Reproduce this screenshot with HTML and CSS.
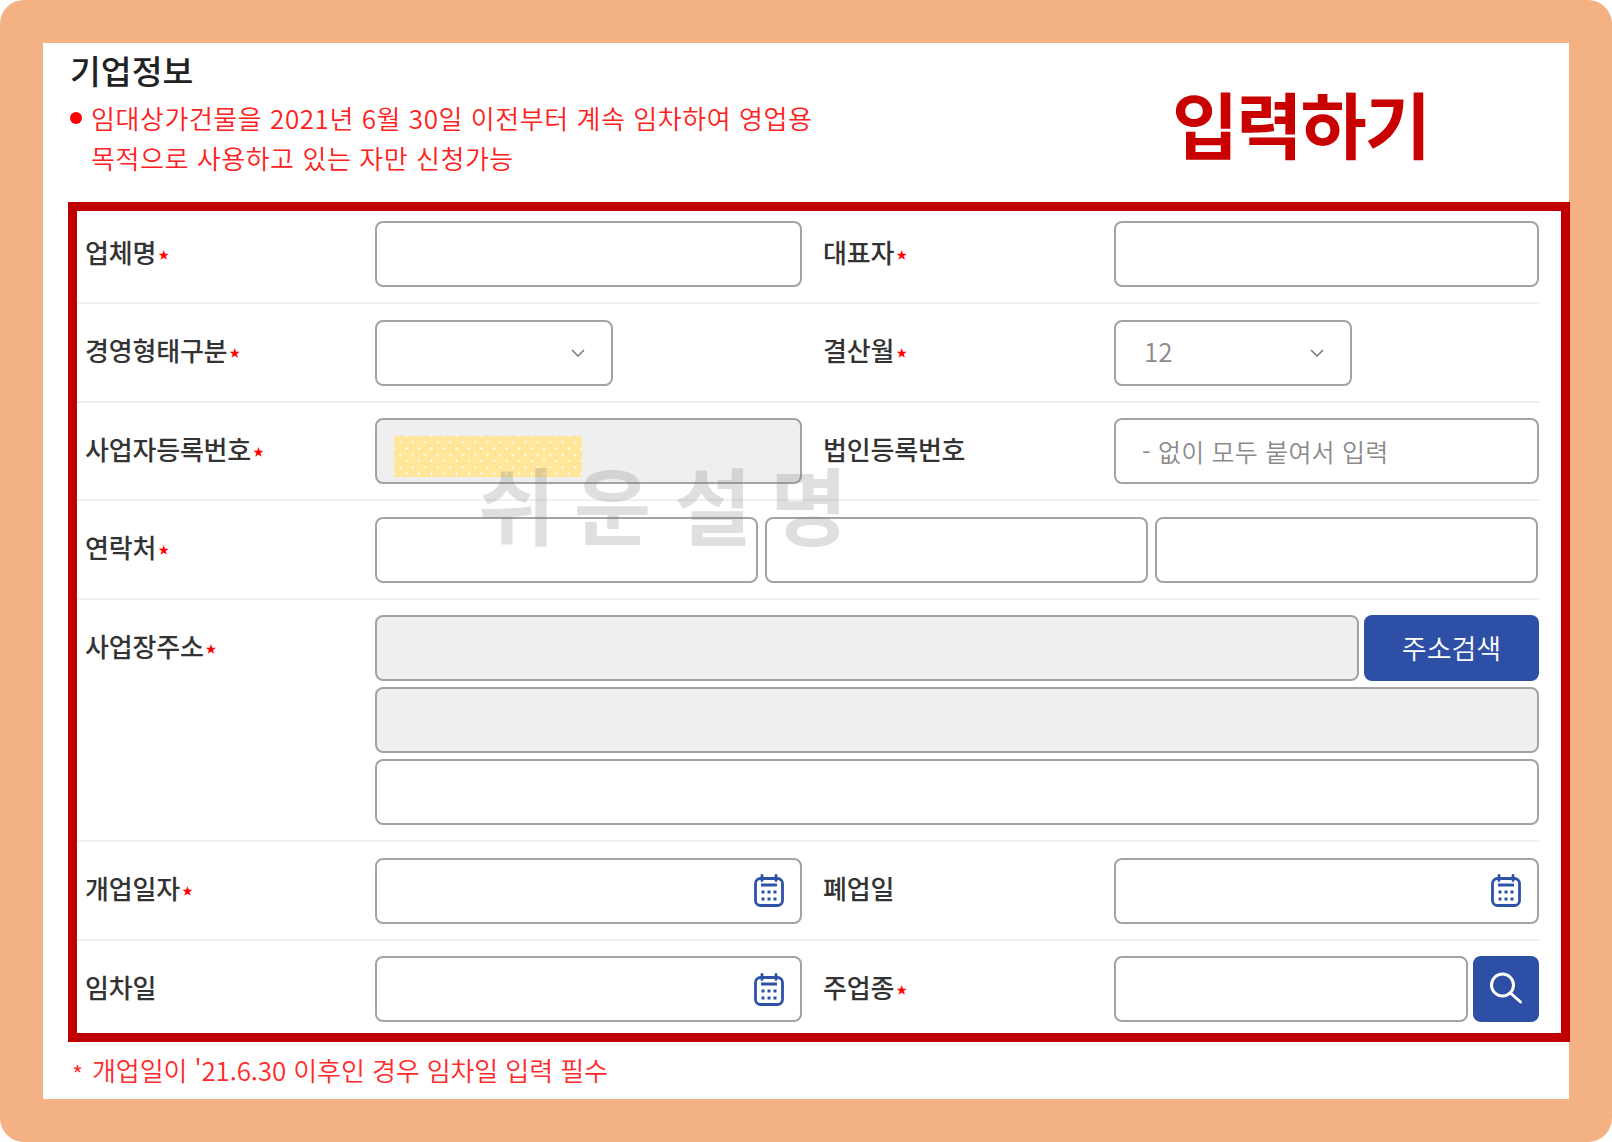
FILE: index.html
```html
<!DOCTYPE html>
<html lang="ko">
<head>
    <meta charset="UTF-8">
    <meta name="viewport" content="width=device-width, initial-scale=1.0">
    <title>기업정보 입력하기</title>
    <link rel="stylesheet" href="styles.css">
</head>
<body>
    <svg class="icon-defs" width="0" height="0" aria-hidden="true">
        <symbol id="calendar" viewBox="0 0 30 33">
            <rect x="1.500" y="4.500" width="27" height="27" rx="5" fill="none" stroke="#2d52a6" stroke-width="2.800"/>
            <path d="M8 1.500v5M22 1.500v5" stroke="#2d52a6" stroke-width="2.800" stroke-linecap="round"/>
            <path d="M7 11h16" stroke="#2d52a6" stroke-width="3"/>
            <path d="M7.500 18h3M13.500 18h3M19.500 18h3M7.500 25h3M13.500 25h3M19.500 25h3" stroke="#2d52a6" stroke-width="3"/>
        </symbol>
    </svg>

    <div class="sheet">
        <div class="card">
            <!-- Heading -->
            <div class="head">
                <div class="head-text">
                    <h1 class="title">기업정보</h1>
                    <ul class="notice">
                        <li>임대상가건물을 2021년 6월 30일 이전부터 계속 임차하여 영업용<br>목적으로 사용하고 있는 자만 신청가능</li>
                    </ul>
                </div>
                <div class="stamp">입력하기</div>
            </div>

            <!-- Form -->
            <div class="frame">
                <div class="row">
                    <label class="label">업체명<span class="req">★</span></label>
                    <input class="input" type="text">
                    <label class="label label-2">대표자<span class="req">★</span></label>
                    <input class="input" type="text">
                </div>
                <div class="row">
                    <label class="label">경영형태구분<span class="req">★</span></label>
                    <div class="select"><svg class="chevron" viewBox="0 0 14 8"><path d="M1 1l6 6 6-6"/></svg></div>
                    <label class="label label-2">결산월<span class="req">★</span></label>
                    <div class="select"><span class="select-value">12</span><svg class="chevron" viewBox="0 0 14 8"><path d="M1 1l6 6 6-6"/></svg></div>
                </div>
                <div class="row">
                    <label class="label">사업자등록번호<span class="req">★</span></label>
                    <div class="input input-off masked"><span class="mask"></span></div>
                    <label class="label label-2">법인등록번호</label>
                    <input class="input" type="text" placeholder="- 없이 모두 붙여서 입력">
                </div>
                <div class="row">
                    <label class="label">연락처<span class="req">★</span></label>
                    <div class="wide phone">
                        <input class="input" type="text">
                        <input class="input" type="text">
                        <input class="input" type="text">
                    </div>
                </div>
                <div class="row row-top">
                    <label class="label label-top">사업장주소<span class="req">★</span></label>
                    <div class="wide address">
                        <div class="address-line">
                            <div class="input input-off"></div>
                            <button class="btn-address" type="button">주소검색</button>
                        </div>
                        <div class="input input-off"></div>
                        <input class="input" type="text">
                    </div>
                </div>
                <div class="row">
                    <label class="label">개업일자<span class="req">★</span></label>
                    <div class="input date"><svg class="cal"><use href="#calendar"/></svg></div>
                    <label class="label label-2">폐업일</label>
                    <div class="input date"><svg class="cal"><use href="#calendar"/></svg></div>
                </div>
                <div class="row row-last">
                    <label class="label">임차일</label>
                    <div class="input date"><svg class="cal"><use href="#calendar"/></svg></div>
                    <label class="label label-2">주업종<span class="req">★</span></label>
                    <div class="search-line">
                        <input class="input" type="text">
                        <button class="btn-search" type="button" aria-label="검색">
                            <svg viewBox="0 0 40 40" width="40" height="40"><circle cx="16.500" cy="16" r="11"/><path d="M25 24.500l9.500 8.500"/></svg>
                        </button>
                    </div>
                </div>
                <div class="watermark">쉬운 설명</div>
            </div>

            <p class="footnote"><span class="foot-star">*</span>개업일이 '21.6.30 이후인 경우 임차일 입력 필수</p>
        </div>
    </div>
</body>
</html>
```

FILE: styles.css
```css
* {
    box-sizing: border-box;
}
body {
    margin: 0;
    background: #fff;
    font-family: "Noto Sans CJK KR", "Noto Sans", sans-serif;
    color: #333;
}
.icon-defs {
    position: absolute;
}
.sheet {
    width: 1612px;
    height: 1142px;
    padding: 43px;
    background: #f4b183;
    border-radius: 24px;
}
.card {
    width: 1526px;
    height: 1056px;
    background: #fff;
    padding-left: 25px;
}

/* heading */
.head {
    display: flex;
    height: 159px;
}
.head-text {
    width: 1080px;
    padding-left: 2px;
}
.title {
    margin: 0;
    padding-top: 5px;
    height: 55px;
    font-size: 33.500px;
    line-height: 44px;
    font-weight: 500;
    color: #222;
}
.notice {
    margin: 0;
    padding: 0 0 0 21px;
    list-style: none;
    position: relative;
    font-size: 26px;
    line-height: 40px;
    font-weight: 350;
    letter-spacing: 0.550px;
    color: #ff2020;
}
.notice::before {
    content: "";
    position: absolute;
    left: 0;
    top: 14px;
    width: 12px;
    height: 12px;
    border-radius: 50%;
    background: #f00;
}
.stamp {
    margin-left: 24px;
    padding-top: 29px;
    font-size: 72px;
    line-height: 100px;
    font-weight: 700;
    color: #c80000;
    letter-spacing: -2px;
    white-space: nowrap;
}

/* form */
.frame {
    position: relative;
    width: 1502px;
    height: 840px;
    border: 9px solid #c00000;
    padding-top: 10px;
}
.row {
    display: grid;
    grid-template-columns: 290px 426.500px 312.500px 425px;
    align-items: center;
    width: 1462px;
    padding: 0 0 15px 8px;
    margin-bottom: 15.500px;
    border-bottom: 2px solid #f0f0f0;
}
.row-top {
    align-items: start;
}
.row-last {
    border-bottom: 0;
    margin-bottom: 0;
    padding-bottom: 0;
}
.label {
    padding-bottom: 5px;
    font-size: 26px;
    line-height: 36px;
    font-weight: 500;
    letter-spacing: -0.200px;
    color: #333;
}
.label-2 {
    padding-left: 21.500px;
}
.label-top {
    padding-top: 13px;
}
.req {
    color: #f00;
    font-size: 11px;
    line-height: 0;
    margin-left: 2px;
    vertical-align: 4px;
}
.input {
    display: block;
    width: 100%;
    height: 66px;
    padding: 0 26px;
    border: 2px solid #a3a3a3;
    border-radius: 8px;
    background: #fff;
    font-family: inherit;
    font-size: 25px;
    color: #333;
}
.input::placeholder {
    color: #8a8a8a;
    font-weight: 350;
    letter-spacing: 0.200px;
}
.input-off {
    background: #efefef;
}
.masked {
    padding: 16px 17px;
}
.mask {
    display: block;
    width: 188px;
    height: 41px;
    background-color: #ffe699;
    background-image: radial-gradient(circle, #fff 0.9px, transparent 1.2px), radial-gradient(circle, #fff 0.9px, transparent 1.2px);
    background-size: 12.500px 12.500px;
    background-position: 0 0, 6.250px 6.250px;
}
.select {
    display: flex;
    align-items: center;
    justify-content: space-between;
    width: 238px;
    height: 66px;
    padding: 0 26px 0 28px;
    border: 2px solid #a3a3a3;
    border-radius: 8px;
    font-size: 26px;
    font-weight: 350;
    color: #8a8a8a;
}
.select-value {
    padding-bottom: 4px;
}
.chevron {
    width: 14px;
    height: 8px;
    margin-left: auto;
    fill: none;
    stroke: #777;
    stroke-width: 1.500;
}
.wide {
    grid-column: 2 / 5;
}
.phone {
    display: flex;
    gap: 6.500px;
    padding-right: 1px;
}
.address {
    display: flex;
    flex-direction: column;
    gap: 6px;
}
.address-line {
    display: flex;
    gap: 5px;
}
.address-line .input {
    flex: 1;
}
.btn-address {
    width: 175px;
    height: 66px;
    padding-bottom: 2px;
    border: 0;
    border-radius: 8px;
    background: #2d50a6;
    color: #fff;
    font-family: inherit;
    font-size: 27px;
    font-weight: 350;
}
.date {
    display: flex;
    align-items: center;
    justify-content: flex-end;
    padding: 0 16px 0 0;
}
.cal {
    width: 30px;
    height: 33px;
}
.search-line {
    display: flex;
    gap: 5px;
}
.search-line .input {
    flex: 1;
}
.btn-search {
    display: flex;
    align-items: center;
    justify-content: center;
    flex: none;
    width: 66px;
    height: 66px;
    padding: 0;
    border: 0;
    border-radius: 8px;
    background: #2d50a6;
}
.btn-search svg {
    fill: none;
    stroke: #fff;
    stroke-width: 3;
    stroke-linecap: round;
}
.watermark {
    position: absolute;
    left: 401px;
    top: 252px;
    font-size: 84px;
    line-height: 80px;
    font-weight: 700;
    letter-spacing: 18.500px;
    word-spacing: -37px;
    color: rgba(120, 120, 120, 0.24);
    white-space: nowrap;
    pointer-events: none;
}
.footnote {
    margin: 10px 0 0 4px;
    font-size: 26px;
    line-height: 36px;
    font-weight: 350;
    letter-spacing: -0.100px;
    color: #ff2a2a;
}
.foot-star {
    display: inline-block;
    width: 20px;
    font-size: 24px;
    vertical-align: -3px;
}
```
